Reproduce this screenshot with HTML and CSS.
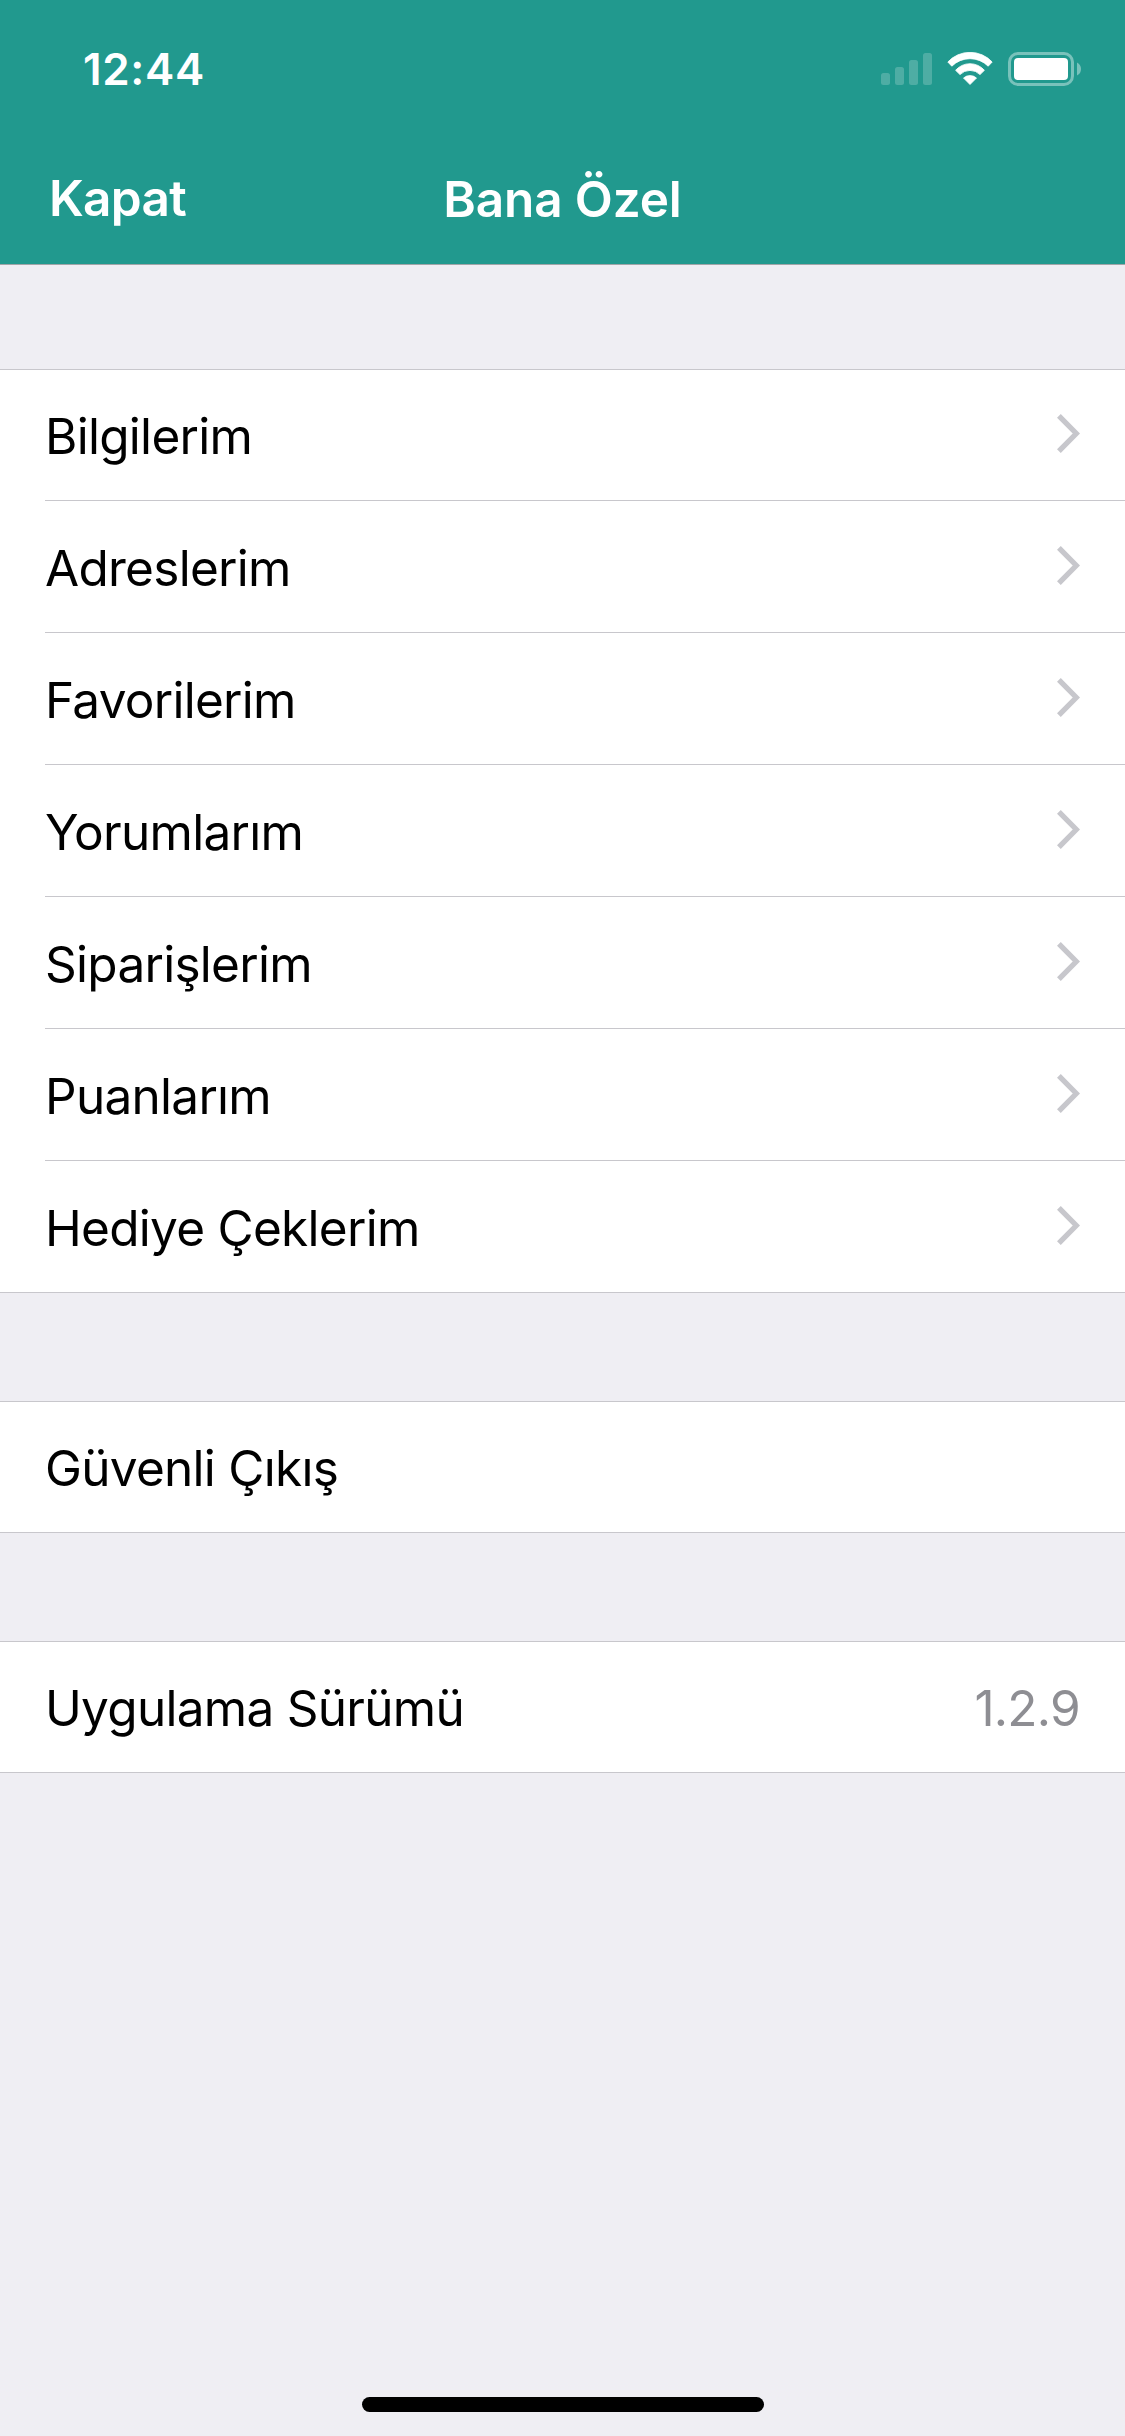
FILE: index.html
```html
<!DOCTYPE html>
<html lang="tr">
  <head>
    <meta charset="UTF-8" />
    <meta name="viewport" content="width=device-width, initial-scale=1" />
    <title>Bana Özel</title>
    <link rel="stylesheet" href="styles.css">
  </head>
  <body>
    <svg class="sprite" aria-hidden="true">
      <symbol id="chevron" viewBox="0 0 23 39">
        <path d="M1.9 1.9L19.3 19.5L1.9 37.1" fill="none" stroke="currentColor" stroke-width="5.3" />
      </symbol>
    </svg>

    <header class="header">
      <div class="status-bar">
        <span class="time">12:44</span>
        <div class="status-icons">
          <svg class="signal" width="51" height="32" viewBox="0 0 51 32" fill="#fff">
            <rect x="0" y="20" width="9" height="12" rx="2.5" />
            <rect x="14" y="14" width="9" height="18" rx="2.5" />
            <rect x="28" y="7" width="9" height="25" rx="2.5" />
            <rect x="42" y="0" width="9" height="32" rx="2.5" />
          </svg>
          <svg width="46" height="34" viewBox="0 0 46 34" fill="#fff" stroke="#fff" stroke-width="0.8" stroke-linejoin="round">
            <path d="M0.8 10A30.3 30.3 0 0 1 45.2 10L41.2 14.2A25.8 25.8 0 0 0 4.8 14.2Z" />
            <path d="M8.6 18.3A19 19 0 0 1 37.4 18.3L33 22.6A14 14 0 0 0 13 22.6Z" />
            <path d="M16.5 26A10 10 0 0 1 29.5 26L23 32.5Z" />
          </svg>
          <svg width="73" height="34" viewBox="0 0 73 34">
            <rect x="1.5" y="1.5" width="63" height="31" rx="8.5" fill="none" stroke="#fff" stroke-width="3" opacity="0.4" />
            <rect x="6" y="6" width="54" height="22" rx="4" fill="#fff" />
            <path d="M69 10.5Q73 12.5 73 17T69 23.5Z" fill="#fff" opacity="0.4" />
          </svg>
        </div>
      </div>
      <nav class="nav-bar">
        <a class="close">Kapat</a>
        <h1 class="title">Bana Özel</h1>
      </nav>
    </header>

    <main>
      <ul class="group">
        <li class="row"><span class="label">Bilgilerim</span><svg class="chevron"><use href="#chevron" /></svg></li>
        <li class="row"><span class="label">Adreslerim</span><svg class="chevron"><use href="#chevron" /></svg></li>
        <li class="row"><span class="label">Favorilerim</span><svg class="chevron"><use href="#chevron" /></svg></li>
        <li class="row"><span class="label">Yorumlarım</span><svg class="chevron"><use href="#chevron" /></svg></li>
        <li class="row"><span class="label">Siparişlerim</span><svg class="chevron"><use href="#chevron" /></svg></li>
        <li class="row"><span class="label">Puanlarım</span><svg class="chevron"><use href="#chevron" /></svg></li>
        <li class="row"><span class="label">Hediye Çeklerim</span><svg class="chevron"><use href="#chevron" /></svg></li>
      </ul>

      <ul class="group">
        <li class="row"><span class="label">Güvenli Çıkış</span></li>
      </ul>

      <ul class="group">
        <li class="row"><span class="label">Uygulama Sürümü</span><span class="value">1.2.9</span></li>
      </ul>
    </main>

    <div class="home-indicator"></div>
  </body>
</html>
```

FILE: styles.css
```css
:root {
  --bg: #efeef3;
  --teal: #21998e;
  --border: #c8c7cc;
  --muted: #8e8e93;
}
* {
  box-sizing: border-box;
  margin: 0;
  padding: 0;
}
body {
  display: flex;
  flex-direction: column;
  height: 2436px;
  background: var(--bg);
  color: #000;
  font-family: Inter, sans-serif;
  font-size: 49.5px;
  letter-spacing: -0.72px;
}
svg {
  display: block;
}
.sprite {
  display: none;
}
.header {
  background: var(--teal);
  color: #fff;
  border-bottom: 1px solid #a1a5a8;
}
.status-bar {
  display: flex;
  justify-content: space-between;
  align-items: center;
  height: 132px;
  padding: 6px 44px 0 83px;
}
.time {
  font-size: 44px;
  font-weight: 600;
  letter-spacing: 0.65px;
}
.status-icons {
  display: flex;
  align-items: center;
  gap: 15px;
}
.signal {
  opacity: 0.2;
}
.nav-bar {
  display: grid;
  grid-template-columns: 1fr auto 1fr;
  align-items: center;
  height: 132px;
  padding: 0 49px;
}
.close {
  font-weight: 600;
}
.title {
  padding-top: 2px;
  font-size: inherit;
  font-weight: 600;
  letter-spacing: -0.15px;
}

/* Grouped table */
.group {
  margin-top: 108px;
  padding-left: 45px;
  background: #fff;
  border-top: 1px solid var(--border);
  border-bottom: 1px solid var(--border);
  list-style: none;
}
.group:first-child {
  margin-top: 104px;
}
.row {
  display: flex;
  justify-content: space-between;
  align-items: center;
  height: 130px;
  padding-right: 45px;
}
.row:not(:last-child) {
  height: 131px;
  border-bottom: 1px solid var(--border);
}
.row:not(:first-child) {
  height: 132px;
}
.row:last-child:not(:first-child) {
  height: 131px;
}
.label,
.value {
  padding-top: 2px;
}
.value {
  color: var(--muted);
}
.chevron {
  width: 23px;
  height: 39px;
  margin-bottom: 3px;
  color: #c7c7cc;
}

.home-indicator {
  width: 402px;
  height: 15px;
  margin: auto auto 24px;
  background: #000;
  border-radius: 7.5px;
}
```
